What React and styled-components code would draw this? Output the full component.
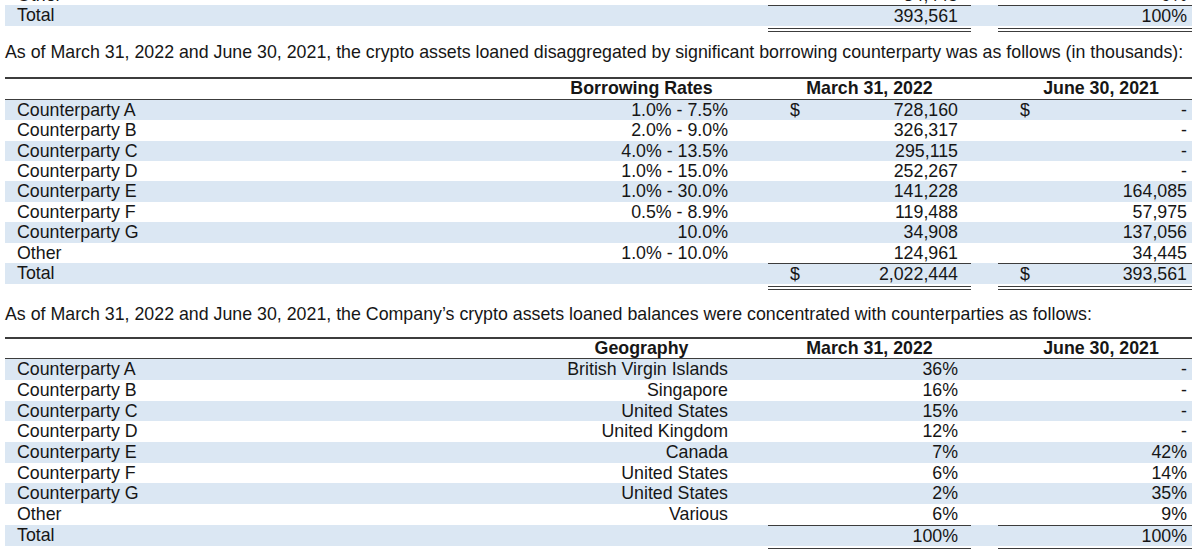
import React from 'react';
import styled, { createGlobalStyle } from 'styled-components';

const GlobalStyle = createGlobalStyle`
  body {
    margin: 0;
    background: #ffffff;
    font-family: "Liberation Sans", Arial, sans-serif;
    color: #161616;
    overflow: hidden;
  }
`;

const COLS = '545px 183px 35px 203px 27px 194px';
const BAND = '#dbe7f3';
const RULE = '#3c3c3c';

const Page = styled.div`
  width: 1187px;
  padding-left: 5px;
  height: 550px;
  overflow: hidden;
  font-size: 17.8px;
`;

const Fragment = styled.div`
  margin-top: -15px;
`;

const Paragraph = styled.p`
  margin: ${(p) => p.top}px 0 0;
  line-height: 20px;
  white-space: nowrap;
`;

const Table = styled.div`
  margin-top: ${(p) => p.top}px;
`;

const HeaderRow = styled.div`
  display: grid;
  grid-template-columns: ${COLS};
  height: 19.5px;
  line-height: 19.5px;
  border-top: 2px solid ${RULE};
  border-bottom: 1.5px solid ${RULE};
  font-weight: bold;
`;

const HeaderCell = styled.div`
  grid-column: ${(p) => p.col};
  text-align: center;
  padding-left: ${(p) => p.shift || 0}px;
  white-space: nowrap;
`;

const Row = styled.div`
  display: grid;
  grid-template-columns: ${COLS};
  height: ${(p) => p.h}px;
  line-height: ${(p) => p.h}px;
  background: ${(p) => (p.shaded ? BAND : 'transparent')};
`;

const Label = styled.div`
  grid-column: 1;
  padding-left: 12px;
  white-space: nowrap;
`;

const Rate = styled.div`
  grid-column: 2;
  text-align: right;
  padding-right: 5px;
  white-space: nowrap;
`;

const Money = styled.div`
  grid-column: ${(p) => p.col};
  display: flex;
  justify-content: space-between;
  padding-left: 22px;
  padding-right: ${(p) => (p.col === 4 ? 13 : 5)}px;
  border-top: ${(p) => (p.total ? `1.5px solid ${RULE}` : 'none')};
  line-height: ${(p) => (p.total ? 'normal' : 'inherit')};
  align-items: center;
  white-space: nowrap;
`;

const Value = styled.span`
  margin-left: auto;
`;

const UnderRow = styled.div`
  display: grid;
  grid-template-columns: ${COLS};
  margin-top: 2px;
  height: 4px;
`;

const DoubleRule = styled.div`
  grid-column: ${(p) => p.col};
  border-top: 4px double ${RULE};
`;

const loaned = [
  ['Counterparty A', '1.0% - 7.5%', '728,160', '-', true],
  ['Counterparty B', '2.0% - 9.0%', '326,317', '-'],
  ['Counterparty C', '4.0% - 13.5%', '295,115', '-'],
  ['Counterparty D', '1.0% - 15.0%', '252,267', '-'],
  ['Counterparty E', '1.0% - 30.0%', '141,228', '164,085'],
  ['Counterparty F', '0.5% - 8.9%', '119,488', '57,975'],
  ['Counterparty G', '10.0%', '34,908', '137,056'],
  ['Other', '1.0% - 10.0%', '124,961', '34,445'],
];

const concentration = [
  ['Counterparty A', 'British Virgin Islands', '36%', '-'],
  ['Counterparty B', 'Singapore', '16%', '-'],
  ['Counterparty C', 'United States', '15%', '-'],
  ['Counterparty D', 'United Kingdom', '12%', '-'],
  ['Counterparty E', 'Canada', '7%', '42%'],
  ['Counterparty F', 'United States', '6%', '14%'],
  ['Counterparty G', 'United States', '2%', '35%'],
  ['Other', 'Various', '6%', '9%'],
];

const MoneyCell = ({ col, dollar, value, total }) => (
  <Money col={col} total={total}>
    {dollar && <span>$</span>}
    <Value>{value}</Value>
  </Money>
);

const Totals = ({ h, mar, jun, dollar }) => (
  <>
    <Row h={h} shaded>
      <Label>Total</Label>
      <MoneyCell col={4} dollar={dollar} value={mar} total />
      <MoneyCell col={6} dollar={dollar} value={jun} total />
    </Row>
    <UnderRow>
      <DoubleRule col={4} />
      <DoubleRule col={6} />
    </UnderRow>
  </>
);

const Headers = ({ first }) => (
  <HeaderRow>
    <HeaderCell col={2}>{first}</HeaderCell>
    <HeaderCell col={4}>March 31, 2022</HeaderCell>
    <HeaderCell col={6} shift={12}>June 30, 2021</HeaderCell>
  </HeaderRow>
);

const App = () => (
  <Page>
    <GlobalStyle />
    <Fragment>
      <Row h={20.4}>
        <Label>Other</Label>
        <MoneyCell col={4} value="34,445" />
        <MoneyCell col={6} value="9%" />
      </Row>
      <Totals h={21} mar="393,561" jun="100%" dollar={false} />
    </Fragment>

    <Paragraph top={10}>
      As of March 31, 2022 and June 30, 2021, the crypto assets loaned disaggregated by significant borrowing
      counterparty was as follows (in thousands):
    </Paragraph>

    <Table top={15}>
      <Headers first="Borrowing Rates" />
      {loaned.map(([name, rate, mar, jun, dollar], i) => (
        <Row key={name} h={20.4} shaded={i % 2 === 0}>
          <Label>{name}</Label>
          <Rate>{rate}</Rate>
          <MoneyCell col={4} dollar={dollar} value={mar} />
          <MoneyCell col={6} dollar={dollar} value={jun} />
        </Row>
      ))}
      <Totals h={20.8} mar="2,022,444" jun="393,561" dollar />
    </Table>

    <Paragraph top={14}>
      As of March 31, 2022 and June 30, 2021, the Company’s crypto assets loaned balances were concentrated with
      counterparties as follows:
    </Paragraph>

    <Table top={13}>
      <Headers first="Geography" />
      {concentration.map(([name, geo, mar, jun], i) => (
        <Row key={name} h={20.7} shaded={i % 2 === 0}>
          <Label>{name}</Label>
          <Rate>{geo}</Rate>
          <MoneyCell col={4} value={mar} />
          <MoneyCell col={6} value={jun} />
        </Row>
      ))}
      <Totals h={20.7} mar="100%" jun="100%" dollar={false} />
    </Table>
  </Page>
);

export default App;
